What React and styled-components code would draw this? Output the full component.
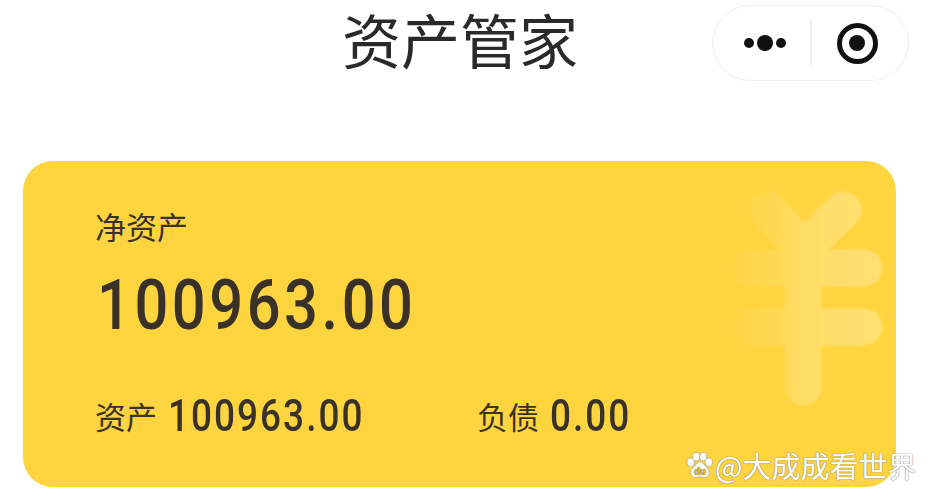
import React from 'react';
import styled, { createGlobalStyle } from 'styled-components';

const GlobalStyle = createGlobalStyle`
    html, body {
        margin: 0;
        padding: 0;
        background: #fff;
    }
    body {
        width: 935px;
        height: 500px;
        overflow: hidden;
        font-family: "Noto Sans CJK SC", sans-serif;
    }
`

const Page = styled.div`
    width: 935px;
    height: 500px;
    position: relative;
    overflow: hidden;
`

const Header = styled.header`
    display: grid;
    grid-template-columns: 1fr 197px;
    align-items: start;
    height: 81px;
    padding: 0 26px 0 208px;
    margin-bottom: 80px;
`

const Title = styled.h1`
    margin: 0;
    text-align: center;
    font-size: 59px;
    line-height: 78px;
    font-weight: 400;
    color: #2a2a2a;
`

const Capsule = styled.div`
    display: flex;
    align-items: center;
    height: 76px;
    margin-top: 5px;
    box-sizing: border-box;
    border: 1px solid #f0f0f0;
    border-radius: 38px;
    background: #fff;
`

const DotSlot = styled.div`
    width: 97px;
    box-sizing: border-box;
    padding-left: 7px;
    display: flex;
    align-items: center;
    justify-content: center;
`

const TargetSlot = styled.div`
    flex: 1;
    box-sizing: border-box;
    padding-right: 6px;
    display: flex;
    align-items: center;
    justify-content: center;
`

const Divider = styled.div`
    width: 2px;
    height: 46px;
    background: #f0f0f0;
`

const Dot = styled.span`
    display: block;
    width: ${p => p.$size}px;
    height: ${p => p.$size}px;
    margin: 0 1.5px;
    border-radius: 50%;
    background: #111;
`

const Target = styled.div`
    display: flex;
    align-items: center;
    justify-content: center;
    width: 41px;
    height: 41px;
    box-sizing: border-box;
    border: 5.5px solid #111;
    border-radius: 50%;
    &::after {
        content: "";
        width: 16px;
        height: 16px;
        border-radius: 50%;
        background: #111;
    }
`

const Card = styled.section`
    position: relative;
    width: 873px;
    height: 326px;
    margin-left: 23px;
    box-sizing: border-box;
    padding: 43px 0 0 72px;
    background: #ffd53f;
    border-radius: 30px;
    color: #3a3228;
`

const Label = styled.div`
    font-size: 31px;
    line-height: 44px;
    font-weight: 400;
`

const Amount = styled.div`
    margin: 18px 0 0 2px;
    font-family: Roboto, sans-serif;
    font-size: 71px;
    line-height: 78px;
    font-weight: 500;
    letter-spacing: 4.2px;
    transform: scaleX(0.84);
    transform-origin: left center;
`

const Summary = styled.div`
    display: flex;
    align-items: center;
    margin-top: 50px;
`

const SummaryItem = styled.div`
    display: flex;
    align-items: center;
    gap: 11px;
    width: ${p => p.$width}px;
`

const SummaryLabel = styled.span`
    font-size: 31px;
    line-height: 44px;
`

const SummaryValue = styled.span`
    font-family: Roboto, sans-serif;
    font-size: 44px;
    line-height: 44px;
    font-weight: 500;
    letter-spacing: 2.4px;
    transform: scaleX(0.84);
    transform-origin: left center;
`

const YenMark = styled.svg`
    position: absolute;
    right: 0;
    top: 0;
    width: 220px;
    height: 326px;
    pointer-events: none;
    filter: blur(1px);
`

const Watermark = styled.div`
    position: absolute;
    left: 686px;
    top: 447px;
    display: flex;
    align-items: center;
    gap: 2px;
    font-size: 29px;
    line-height: 36px;
    color: #fff;
    text-shadow: 0 0 1px #777, 0 0 1px #777;
    white-space: nowrap;
`

function YenIcon() {
    return (
        <YenMark viewBox="0 0 220 326">
            <defs>
                <linearGradient id="fade" gradientUnits="userSpaceOnUse" x1="50" y1="0" x2="190" y2="0">
                    <stop offset="0" stopColor="#fff" stopOpacity="0.01"/>
                    <stop offset="0.21" stopColor="#fff" stopOpacity="0.07"/>
                    <stop offset="0.39" stopColor="#fff" stopOpacity="0.12"/>
                    <stop offset="0.54" stopColor="#fff" stopOpacity="0.2"/>
                    <stop offset="1" stopColor="#fff" stopOpacity="0.26"/>
                </linearGradient>
            </defs>
            <path
                d="M92 49 L127 88 L167 49 M127 88 V226 M75 107 H188 M75 166 H188"
                fill="none"
                stroke="url(#fade)"
                strokeWidth="37"
                strokeLinecap="round"
                strokeLinejoin="round"
            />
        </YenMark>
    )
}

function BaiduPaw() {
    return (
        <svg width="27" height="26" viewBox="0 0 28 28">
            <g fill="#fff" stroke="#8a8a8a" strokeWidth="0.6">
                <ellipse cx="4.500" cy="11" rx="4" ry="4.500"/>
                <ellipse cx="10.500" cy="5" rx="3.800" ry="4.500"/>
                <ellipse cx="18" cy="5" rx="3.800" ry="4.500"/>
                <ellipse cx="24" cy="11" rx="4" ry="4.500"/>
                <path d="M14.500 10.500c-3 0-4 3-6.500 5.500-2 1.800-3.500 3.500-3.500 6 0 3.200 2.500 5.500 5.500 5.500 2 0 3.500-.6 4.500-.6s2.500 .6 4.500 .6c3 0 5.500-2.300 5.500-5.500 0-2.500-1.500-4.200-3.500-6-2.500-2.500-3.500-5.500-6.500-5.500z"/>
            </g>
            <text x="14.500" y="25" textAnchor="middle" fontSize="11" fontWeight="700" fontFamily="Roboto, sans-serif" fill="#e3b92f">du</text>
        </svg>
    )
}

export default function App() {
    return (
        <Page>
            <GlobalStyle/>
            <Header>
                <Title>资产管家</Title>
                <Capsule>
                    <DotSlot>
                        <Dot $size={10}/>
                        <Dot $size={16}/>
                        <Dot $size={10}/>
                    </DotSlot>
                    <Divider/>
                    <TargetSlot>
                        <Target/>
                    </TargetSlot>
                </Capsule>
            </Header>
            <Card>
                <Label>净资产</Label>
                <Amount>100963.00</Amount>
                <Summary>
                    <SummaryItem $width={382}>
                        <SummaryLabel>资产</SummaryLabel>
                        <SummaryValue>100963.00</SummaryValue>
                    </SummaryItem>
                    <SummaryItem>
                        <SummaryLabel>负债</SummaryLabel>
                        <SummaryValue>0.00</SummaryValue>
                    </SummaryItem>
                </Summary>
                <YenIcon/>
            </Card>
            <Watermark>
                <BaiduPaw/>
                <span>@大成成看世界</span>
            </Watermark>
        </Page>
    )
}
